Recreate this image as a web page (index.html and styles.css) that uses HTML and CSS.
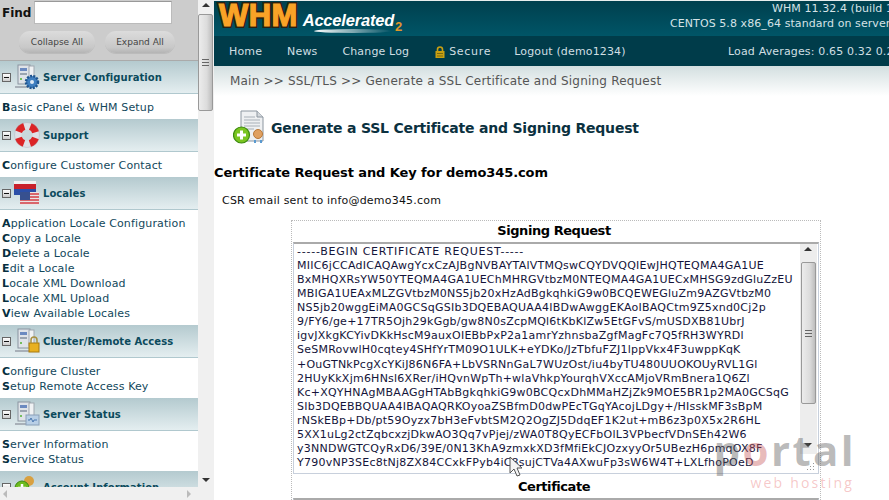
FILE: index.html
```html
<!DOCTYPE html>
<html lang="en">
<head>
<meta charset="utf-8">
<title>Generate a SSL Certificate and Signing Request</title>
<link rel="stylesheet" href="styles.css">
</head>
<body>
<aside class="side">
  <div class="side-pane">
    <div class="side-inner">
      <div class="find">
        <div class="find-row"><label class="find-label">Find</label><div class="find-input"></div></div>
        <div class="find-btns"><span class="pill pill-a">Collapse All</span><span class="pill pill-b">Expand All</span></div>
      </div>
      <section class="grp">
        <div class="grp-head"><span class="tog"></span>
          <svg class="gi" viewBox="0 0 26 26"><use href="#srv"/><circle cx="18" cy="18" r="6" fill="#3f7fc0" stroke="#1f558f" stroke-width="2.5" stroke-dasharray="2 1.2"/><circle cx="18" cy="18" r="2" fill="#dfeaf5"/></svg>
          <span class="grp-title">Server Configuration</span></div>
        <ul class="items"><li><b>B</b>asic cPanel &amp; WHM Setup</li></ul>
      </section>
      <section class="grp">
        <div class="grp-head"><span class="tog"></span>
          <svg class="gi" viewBox="0 0 26 26"><circle cx="13" cy="13" r="9" fill="#c9d9dd" stroke="#dfe0e6" stroke-width="7"/><circle cx="13" cy="13" r="9" fill="none" stroke="#dc2426" stroke-width="7" stroke-dasharray="8 6.13" stroke-dashoffset="-3.07"/><circle cx="13" cy="13" r="12.500" fill="none" stroke="#9a9aa8" stroke-width=".6" opacity=".5"/></svg>
          <span class="grp-title">Support</span></div>
        <ul class="items"><li><b>C</b>onfigure Customer Contact</li></ul>
      </section>
      <section class="grp">
        <div class="grp-head"><span class="tog"></span>
          <svg class="gi" viewBox="0 0 26 26"><rect x="0" y="1" width="22" height="4" fill="#f1f1f1"/><rect x="0" y="4" width="22" height="8" fill="#c8202a"/><rect x="0" y="9" width="22" height="6" fill="#2b4fa8"/><rect x="6" y="12" width="19" height="13" fill="#e9e4e4"/><path d="M6 14h19M6 17h19M6 20h19M6 23h19" stroke="#d43c44" stroke-width="1.600"/><rect x="6" y="12" width="10" height="8" fill="#37508f"/></svg>
          <span class="grp-title">Locales</span></div>
        <ul class="items">
          <li><b>A</b>pplication Locale Configuration</li>
          <li><b>C</b>opy a Locale</li>
          <li><b>D</b>elete a Locale</li>
          <li><b>E</b>dit a Locale</li>
          <li><b>L</b>ocale XML Download</li>
          <li><b>L</b>ocale XML Upload</li>
          <li><b>V</b>iew Available Locales</li>
        </ul>
      </section>
      <section class="grp">
        <div class="grp-head"><span class="tog"></span>
          <svg class="gi" viewBox="0 0 26 26"><use href="#srv"/><rect x="15" y="15" width="10" height="9" fill="#e8b020" stroke="#a87a10"/><path d="M17 15v-3a3 3 0 0 1 6 0v3" fill="none" stroke="#a89040" stroke-width="1.500"/></svg>
          <span class="grp-title">Cluster/Remote Access</span></div>
        <ul class="items"><li><b>C</b>onfigure Cluster</li><li><b>S</b>etup Remote Access Key</li></ul>
      </section>
      <section class="grp">
        <div class="grp-head"><span class="tog"></span>
          <svg class="gi" viewBox="0 0 26 26"><use href="#srv"/><rect x="12" y="14" width="13" height="10" fill="#b8cfe6" stroke="#8aa0b8"/><path d="M14 19h2l1-2 2 4 1-2h3" fill="none" stroke="#4a78b0"/></svg>
          <span class="grp-title">Server Status</span></div>
        <ul class="items"><li><b>S</b>erver Information</li><li><b>S</b>ervice Status</li></ul>
      </section>
      <section class="grp">
        <div class="grp-head"><span class="tog"></span>
          <svg class="gi" viewBox="0 0 26 26"><circle cx="15" cy="7" r="5" fill="#d8a040"/><path d="M9 24c0-8 3-11 6-11s7 3 7 11z" fill="#c07828"/><circle cx="8" cy="14" r="7" fill="#6dbb1e" stroke="#3c8a10"/><path d="M8 10v8M4 14h8" stroke="#fff" stroke-width="2.500"/></svg>
          <span class="grp-title">Account Information</span></div>
      </section>
    </div>
    <div class="hbar"><span class="arr-l"></span><span class="arr-r"></span></div>
  </div>
  <div class="vbar side-vbar">
    <span class="arr-u"></span>
    <span class="thumb side-thumb"><i class="grip"></i></span>
    <span class="arr-d"></span>
  </div>
</aside>

<main class="main">
  <header class="top">
    <div class="logo">
      <span class="logo-whm">WHM</span><span class="logo-acc">Accelerated</span><span class="logo-two">2</span>
    </div>
    <div class="ver">
      <div class="ver-a">WHM 11.32.4 (build 10)</div>
      <div class="ver-b">CENTOS 5.8 x86_64 standard on server</div>
    </div>
  </header>
  <nav class="nav">
    <span class="nav-home">Home</span>
    <span class="nav-news">News</span>
    <span class="nav-log">Change Log</span>
    <svg class="lock" viewBox="0 0 10 12"><path d="M2.500 6V3.500a2.500 2.500 0 0 1 5 0V6" fill="none" stroke="#c9a012" stroke-width="1.600"/><rect x="0.500" y="5" width="9" height="7" fill="#c9a012"/><rect x="2" y="7" width="6" height="1" fill="#7a6a10"/><rect x="2" y="9.500" width="6" height="1" fill="#7a6a10"/></svg>
    <span class="nav-sec">Secure</span>
    <span class="nav-out">Logout (demo1234)</span>
    <span class="nav-load">Load Averages: 0.65 0.32 0.25</span>
  </nav>
  <div class="crumb">Main &gt;&gt; SSL/TLS &gt;&gt; Generate a SSL Certificate and Signing Request</div>
  <div class="title">
    <svg class="title-ico" viewBox="0 0 34 34"><path d="M8 1h16l6 6v24H8z" fill="#eef0f2" stroke="#8c96a0"/><path d="M24 1v6h6" fill="#d4d8dc" stroke="#8c96a0"/><path d="M11 7h11M11 10h16M11 13h16M11 16h16M11 19h10" stroke="#a8b0b8"/><circle cx="25" cy="24" r="4.500" fill="#e0a060" stroke="#b87838"/><path d="M22 30v3M28 30v3" stroke="#5a9ad0" stroke-width="2"/><circle cx="8.500" cy="25" r="8" fill="#7ac520" stroke="#3c8a10" stroke-width="1.200"/><path d="M8.500 20.500v9M4 25h9" stroke="#fff" stroke-width="3"/></svg>
    <h1 class="title-text">Generate a SSL Certificate and Signing Request</h1>
  </div>
  <h2 class="sub">Certificate Request and Key for demo345.com</h2>
  <p class="note">CSR email sent to info@demo345.com</p>
  <div class="box">
    <h3 class="box-h">Signing Request</h3>
    <div class="area">
      <pre class="csr"><span class="csr-first">-----BEGIN CERTIFICATE REQUEST-----</span>
MIIC6jCCAdICAQAwgYcxCzAJBgNVBAYTAlVTMQswCQYDVQQIEwJHQTEQMA4GA1UE
BxMHQXRsYW50YTEQMA4GA1UEChMHRGVtbzM0NTEQMA4GA1UECxMHSG9zdGluZzEU
MBIGA1UEAxMLZGVtbzM0NS5jb20xHzAdBgkqhkiG9w0BCQEWEGluZm9AZGVtbzM0
NS5jb20wggEiMA0GCSqGSIb3DQEBAQUAA4IBDwAwggEKAoIBAQCtm9Z5xnd0Cj2p
9/FY6/ge+17TR5Ojh29kGgb/gw8N0sZcpMQl6tKbKlZw5EtGFvS/mUSDXB81UbrJ
igvJXkgKCYivDKkHscM9auxOIEBbPxP2a1amrYzhnsbaZgfMagFc7Q5fRH3WYRDl
SeSMRovwlH0cqtey4SHfYrTM09O1ULK+eYDKo/JzTbfuFZJ1lppVkx4F3uwppKqK
+OuGTNkPcgXcYKiJ86N6FA+LbVSRNnGaL7WUzOst/iu4byTU480UUOKOUyRVL1Gl
2HUyKkXjm6HNsl6XRer/iHQvnWpTh+wlaVhkpYourqhVXccAMjoVRmBnera1Q6Zl
Kc+XQYHNAgMBAAGgHTAbBgkqhkiG9w0BCQcxDhMMaHZjZk9MOE5BR1p2MA0GCSqG
SIb3DQEBBQUAA4IBAQAQRKOyoaZSBfmD0dwPEcTGqYAcojLDgy+/HIsskMF3sBpM
rNSkEBp+Db/pt59Oyzx7bH3eFvbtSM2Q2OgZJ5DdqEF1K2ut+mB6z3p0X5x2R6HL
5XX1uLg2ctZqbcxzjDkwAO3Qq7vPjej/zWA0T8QyECFbOlL3VPbecfVDnSEh42W6
y3NNDWGTCQyRxD6/39E/0N13KhA9zmxkXD3fMfiEkCJOzxyyOr5UBezH6pmqOX8F
Y790vNP3SEc8tNj8ZX84CCxkFPyb4iC8sujCTVa4AXwuFp3sW6W4T+LXLfhoPOeD</pre>
      <div class="vbar area-vbar">
        <span class="arr-u"></span>
        <span class="thumb area-thumb"><i class="grip"></i></span>
        <span class="arr-d"></span>
      </div>
      <span class="resize"></span>
    </div>
    <h3 class="box-h box-h2">Certificate</h3>
    <div class="area area2"></div>
  </div>
  <div class="mark"><span class="mark-p">p<span class="mark-o">o</span>rtal</span><span class="mark-w">web hosting</span></div>
  <svg class="cursor" viewBox="0 0 14 22"><path d="M1 1v16l4-4 3 7 3-1-3-7h5z" fill="#f4f4f4" stroke="#555" stroke-width="1"/></svg>
</main>

<svg class="defs" aria-hidden="true"><defs>
  <g id="srv">
    <rect x="4" y="1" width="12" height="19" fill="#dfe3e8" stroke="#8a94a0"/>
    <rect x="15" y="2" width="5" height="16" fill="#f0f2f4" stroke="#a0a8b0"/>
    <rect x="6" y="4" width="7" height="3" fill="#6c8ac0"/>
    <rect x="6" y="9" width="7" height="2" fill="#9aa4b0"/>
    <circle cx="7" cy="15" r="1" fill="#50b030"/>
    <path d="M1 23h18" stroke="#a8b0b8" stroke-width="2"/>
  </g>
</defs></svg>
</body>
</html>
```

FILE: styles.css
```css
* { box-sizing: border-box; }
html, body { margin: 0; padding: 0; }
body {
  width: 889px; height: 500px; overflow: hidden; display: flex;
  font-family: "DejaVu Sans", Verdana, sans-serif; font-size: 11px; background: #fff; color: #000;
}
.defs { width: 0; height: 0; position: absolute; }

/* sidebar */
.side { width: 214px; flex: none; height: 500px; display: flex; background: #f0f0f0; }
.side-pane { width: 198px; flex: none; height: 500px; display: flex; flex-direction: column; background: #fff; }
.side-inner { height: 487px; overflow: hidden; flex: none; }
.find { height: 61px; background: #ccc; border-bottom: 1px solid #aaa; padding-top: 1px; }
.find-row { display: flex; align-items: center; height: 23px; }
.find-label { font: bold 12px "DejaVu Sans", sans-serif; margin-left: 2px; width: 32px; color: #111; }
.find-input { width: 138px; height: 23px; background: #fff; border: 1px solid #bbb; border-top-color: #999; }
.find-btns { display: flex; margin-top: 7px; padding-left: 19px; gap: 10px; }
.pill {
  height: 22px; border-radius: 11px; background: linear-gradient(#dcdcdc, #c8c8c8 75%, #b4b4b4);
  font-size: 9px; color: #444; display: flex; align-items: center; justify-content: center;
  box-shadow: 0 1px 0 #bbb;
}
.pill-a { width: 76px; }
.pill-b { width: 70px; }
.grp-head {
  height: 33px; display: flex; align-items: center; position: relative;
  background: linear-gradient(#b4cacf, #e4eef0); border-bottom: 1px solid #b0c8ce;
}
.tog { width: 9px; height: 9px; border: 1px solid #666; background: linear-gradient(#fff, #ccc); margin-left: 2px; position: relative; flex: none; }
.tog::after { content: ""; position: absolute; left: 1px; top: 3px; width: 5px; height: 1px; background: #111; }
.gi { width: 26px; height: 26px; margin-left: 3px; flex: none; }
.grp-title { font-weight: bold; font-size: 10px; color: #0b4a5c; margin-left: 3px; white-space: nowrap; letter-spacing: .05px; }
.items { list-style: none; margin: 0; padding: 6px 0 4px; }
.items li { height: 15px; line-height: 15px; color: #12485c; padding-left: 2px; white-space: nowrap; font-size: 11px; letter-spacing: .13px; }
.items b { color: #062f40; }

/* scrollbars */
.hbar { height: 13px; background: #f0f0f0; position: relative; flex: none; }
.arr-l, .arr-r, .arr-u, .arr-d { position: absolute; width: 0; height: 0; }
.arr-l { left: 3px; top: 3px; border: 4px solid transparent; border-left: 0; border-right-color: #bbb; }
.arr-r { right: 7px; top: 3px; border: 4px solid transparent; border-right: 0; border-left-color: #bbb; }
.vbar { background: #f0f0f0; position: relative; display: block; }
.side-vbar { width: 16px; height: 500px; flex: none; }
.arr-u { left: 4px; top: 3px; border: 4px solid transparent; border-top: 0; border-bottom-color: #333; }
.arr-d { left: 4px; bottom: 3px; border: 4px solid transparent; border-bottom: 0; border-top-color: #333; }
.side-vbar .arr-d { bottom: 18px; }
.thumb {
  position: absolute; left: 0; width: 15px; display: flex; align-items: center; justify-content: center;
  background: linear-gradient(90deg, #ececec, #dcdcdc 60%, #bdbdbd); border: 1px solid #999; border-radius: 2px;
}
.side-thumb { top: 14px; height: 97px; }
.grip { width: 7px; height: 7px; border-top: 1px solid #666; border-bottom: 1px solid #666; position: relative; }
.grip::after { content: ""; position: absolute; left: 0; right: 0; top: 2px; height: 1px; background: #666; }

/* main */
.main { width: 675px; height: 500px; flex: none; position: relative; overflow: hidden; background: #fff; }
.top {
  height: 36px; display: flex; background: linear-gradient(#00404e, #005567); position: relative; color: #d5e2e6;
  border-top: 1px solid #e8eeee; overflow: hidden;
}
.logo { width: 200px; height: 35px; flex: none; display: flex; align-items: baseline; position: relative; padding-left: 5px; }
.logo::after {
  content: ""; position: absolute; left: 100px; top: 28px; width: 78px; height: 4px; border-radius: 50%;
  background: linear-gradient(90deg, #fff, rgba(255,255,255,0));
}
.logo-whm {
  font: bold 31px/29px "Liberation Sans", sans-serif; color: #f9a327; -webkit-text-stroke: 4px #2a1f10; position: relative; letter-spacing: .4px;
}
.logo-whm::after {
  content: "WHM"; position: absolute; left: 0; top: 0; color: #f9a327; -webkit-text-stroke: 1.2px #f9a327;
}
.logo-acc { font: italic bold 16.5px "Liberation Sans", sans-serif; color: #fff; margin-left: 5px; letter-spacing: -.2px; }
.logo-two { font: bold 13px "Liberation Sans", sans-serif; color: #e0962a; margin-left: 1px; position: relative; top: 5px; }
.ver { flex: none; white-space: nowrap; font-size: 11px; line-height: 15px; letter-spacing: .08px; }
.ver-a { margin-left: 358px; }
.ver-b { margin-left: 256px; }
.nav { height: 30px; padding-top: 1px; background: #003c4a; display: flex; align-items: center; color: #d0dfe3; font-size: 11px; white-space: nowrap; letter-spacing: .15px; }
.nav-home { margin-left: 15px; }
.nav-news { margin-left: 25px; }
.nav-log { margin-left: 25px; }
.lock { width: 10px; height: 12px; margin-left: 26px; flex: none; }
.nav-sec { margin-left: 4px; letter-spacing: .7px; }
.nav-out { margin-left: 23px; }
.nav-load { margin-left: auto; flex: none; width: 161px; overflow: hidden; }
.crumb { height: 30px; background: linear-gradient(#d3dfe0, #fff); color: #555; font-size: 12px; line-height: 30px; padding-left: 16px; white-space: nowrap; letter-spacing: .2px; }
.title { display: flex; align-items: center; height: 34px; margin-top: 14px; padding-left: 19px; }
.title-ico { width: 34px; height: 34px; flex: none; }
.title-text { margin: 2px 0 0 4px; font-size: 14px; font-weight: bold; color: #0b3140; white-space: nowrap; letter-spacing: -.2px; }
.sub { margin: 21px 0 0; font-size: 13px; line-height: 16px; font-weight: bold; color: #000; letter-spacing: -.1px; }
.note { margin: 12px 0 0 8px; font-size: 11px; line-height: 16px; color: #111; letter-spacing: .2px; }
.box { margin: 11px 0 0 77px; width: 530px; border: 1px dotted #bbb; border-bottom: 0; padding: 0 1px; }
.box-h { margin: 0; height: 21px; line-height: 19px; font-size: 13px; text-align: center; font-weight: bold; color: #000; letter-spacing: -.45px; padding-right: 4px; }
.box-h2 { height: 24px; line-height: 25px; margin-top: 0; }
.area { height: 232px; border: 1px solid #c8d0dc; border-top: 2px solid #aaa; position: relative; overflow: hidden; background: #fff; }
.area2 { height: 20px; }
.csr {
  margin: 0; padding: 1px 0 0 3px; font: 11px/14.07px "DejaVu Sans", Verdana, sans-serif; color: #14143a; overflow: hidden; height: 228px; letter-spacing: .24px;
}
.csr-first { letter-spacing: .75px; }
.area-vbar { position: absolute; right: 1px; top: 0; height: 210px; width: 17px; background: #ededed; }
.area-vbar .thumb { top: 18px; height: 142px; left: 1px; }
.area-vbar .arr-d { bottom: 7px; }
.resize { position: absolute; right: 4px; bottom: 3px; width: 8px; height: 8px; background: radial-gradient(circle, #999 0 1px, transparent 1px) 0 0 / 3px 3px; clip-path: polygon(100% 0, 100% 100%, 0 100%); }

/* overlay */
.mark { position: absolute; left: 484px; top: 424px; width: 156px; display: flex; flex-direction: column; align-items: flex-end; pointer-events: none; }
.mark-p { font: bold 42px/51px "Open Sans", sans-serif; color: rgba(90, 90, 90, .42); letter-spacing: 2.4px; height: 52px; margin-right: -2px; }
.mark-o { color: rgba(200, 90, 90, .42); }
.mark-w { font: 14px/14px "Open Sans", sans-serif; color: rgba(230, 100, 100, .36); letter-spacing: 2.2px; white-space: nowrap; }
.cursor { position: absolute; left: 295px; top: 456px; width: 14px; height: 22px; }
```
